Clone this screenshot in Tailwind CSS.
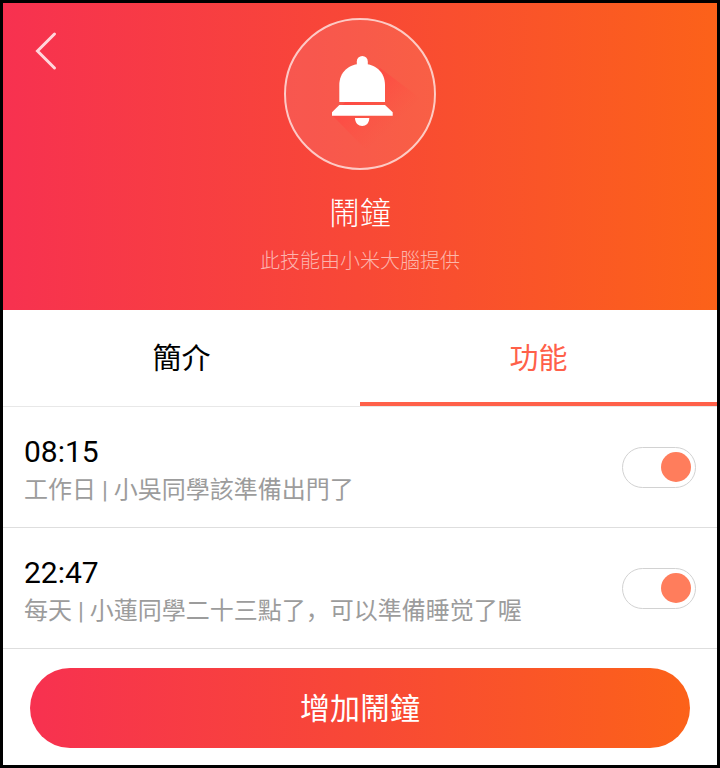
<!DOCTYPE html>
<html lang="zh-CN">
<head>
    <meta charset="UTF-8">
    <meta name="viewport" content="width=device-width, initial-scale=1.0">
    <title>鬧鐘</title>
    <script src="https://cdn.jsdelivr.net/npm/@tailwindcss/browser@4"></script>
</head>
<body class="min-h-screen flex flex-col bg-white border-3 border-black text-black font-[Roboto,'Noto_Sans_CJK_SC',sans-serif]">
    <!-- Skill header -->
    <header class="relative flex flex-col items-center pt-[15px] pb-[34px] bg-linear-[91deg,#f73150,#f84836_50%,#fc6219] text-white">
        <button type="button" aria-label="返回" class="absolute left-[31px] top-7">
            <svg class="w-6 h-10" viewBox="0 0 24 40" fill="none" stroke="#ffd6dc" stroke-width="3" stroke-linecap="round">
                <path d="M20.5 3 3.500 20 20.5 37"/>
            </svg>
        </button>

        <svg class="w-[152px] h-[152px]" viewBox="0 0 152 152" aria-hidden="true">
            <defs>
                <linearGradient id="shade" gradientUnits="userSpaceOnUse" x1="72" y1="74" x2="107" y2="110">
                    <stop offset="0" stop-color="#ff4642" stop-opacity=".8"/>
                    <stop offset="1" stop-color="#ff5040" stop-opacity="0"/>
                </linearGradient>
            </defs>
            <circle cx="76" cy="76" r="75" fill="#fff" fill-opacity=".1" stroke="#fff" stroke-opacity=".7" stroke-width="2"/>
            <path d="M48 97 96 50 136 80 86 136Z" fill="url(#shade)"/>
            <g fill="#fff">
                <path d="M72.800 47V43.500a5.500 5.500 0 0 1 11 0V47Z"/>
                <path d="M55.300 84V67C55.300 54 65 45.700 78.200 45.700S101 54 101 67V84Z"/>
                <path d="M55.300 87H101L108.700 94.300V97.700H48V94.300Z"/>
                <path d="M71 100H85.300C85.300 105 82 108 78.200 108S71 105 71 100Z"/>
            </g>
        </svg>

        <h1 class="mt-[21px] text-[31px] leading-[46px] font-light">鬧鐘</h1>
        <p class="mt-[9px] text-xl leading-[30px] font-light text-white/60">此技能由小米大腦提供</p>
    </header>

    <!-- Tabs -->
    <nav class="grid grid-cols-2 h-[97px] border-b border-[#e8e8e8] text-[29px]">
        <button type="button" class="border-b-4 pt-2 border-transparent">簡介</button>
        <button type="button" class="border-b-4 pt-2 border-[#ff6049] text-[#ff6049]">功能</button>
    </nav>

    <!-- Alarm list -->
    <ul>
        <li class="flex items-center justify-between h-[121px] px-[21px] border-b border-[#dedede]">
            <label for="alarm-1" class="pt-1.5">
                <span class="block text-3xl leading-10">08:15</span>
                <span class="block text-2xl leading-9 text-[#9c9c9c]">工作日 | 小吳同學該準備出門了</span>
            </label>
            <input type="checkbox" id="alarm-1" checked class="appearance-none flex items-center w-[74px] h-[41px] px-1 rounded-full border border-[#d2d2d2] before:size-[30px] before:rounded-full before:bg-[#ccc] checked:justify-end checked:before:bg-[#ff7d5c]">
        </li>
        <li class="flex items-center justify-between h-[121px] px-[21px] border-b border-[#dedede]">
            <label for="alarm-2" class="pt-1.5">
                <span class="block text-3xl leading-10">22:47</span>
                <span class="block text-2xl leading-9 text-[#9c9c9c]">每天 | 小蓮同學二十三點了，可以準備睡觉了喔</span>
            </label>
            <input type="checkbox" id="alarm-2" checked class="appearance-none flex items-center w-[74px] h-[41px] px-1 rounded-full border border-[#d2d2d2] before:size-[30px] before:rounded-full before:bg-[#ccc] checked:justify-end checked:before:bg-[#ff7d5c]">
        </li>
    </ul>

    <div class="px-[27px] pt-[19px]">
        <button type="button" class="w-full h-20 pt-0.5 rounded-full bg-linear-[91deg,#f73150,#f84836_50%,#fc6219] text-white text-3xl">增加鬧鐘</button>
    </div>
</body>
</html>
